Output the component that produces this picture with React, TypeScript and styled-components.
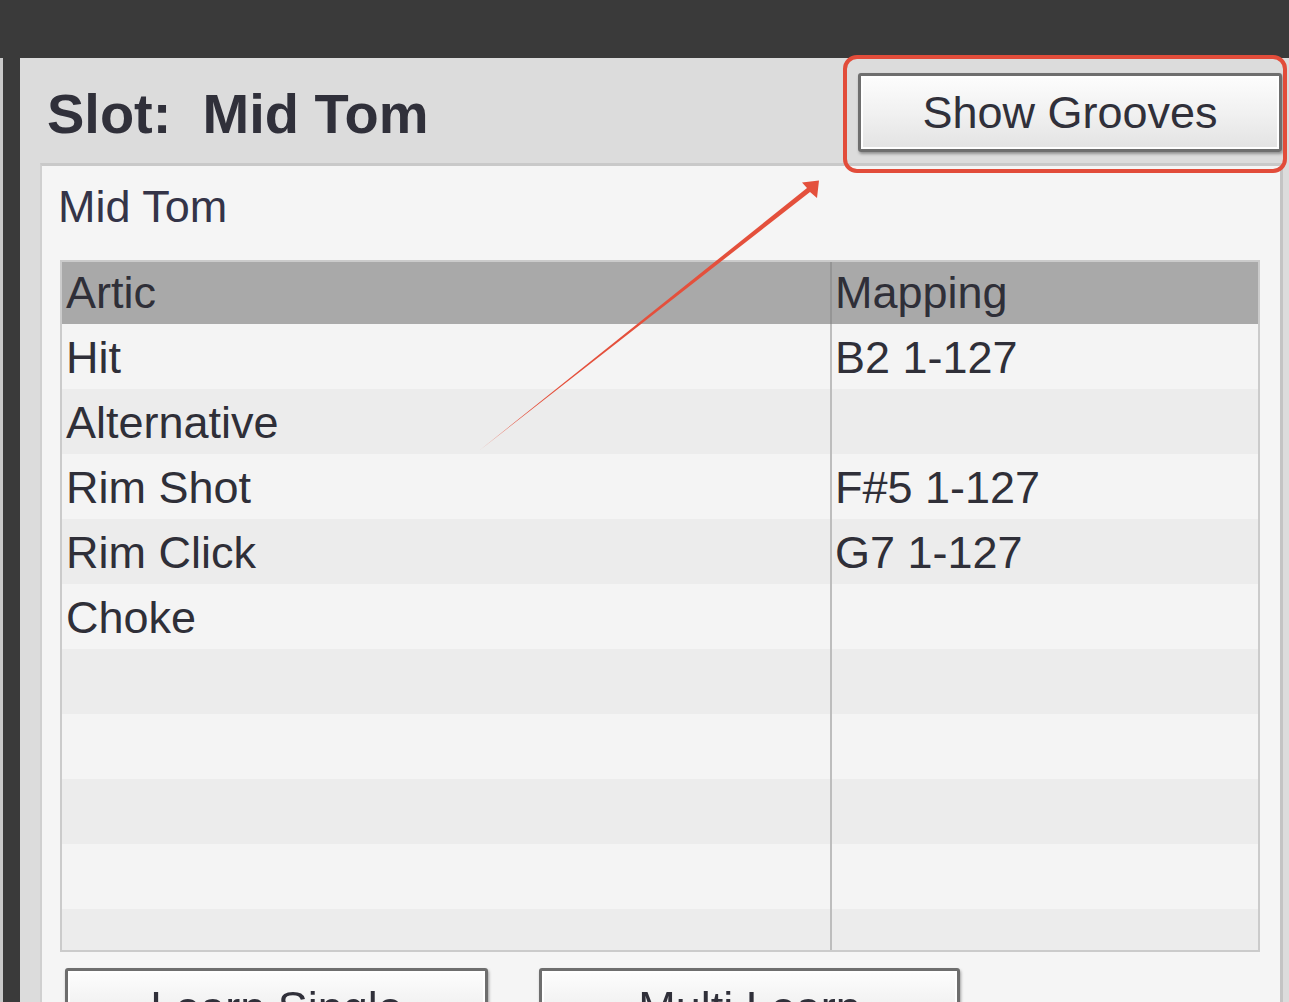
import React from "react";
import styled, { createGlobalStyle } from "styled-components";

const GlobalStyle = createGlobalStyle`
  html, body {
    margin: 0;
    padding: 0;
    overflow: hidden;
    background: #dcdcdc;
  }
  * {
    box-sizing: border-box;
  }
`;

const Screen = styled.div`
  position: relative;
  width: 1289px;
  height: 1002px;
  overflow: hidden;
  font-family: "Liberation Sans", Arial, sans-serif;
  color: #2f2f38;
`;

const Window = styled.div`
  display: flex;
  flex-direction: column;
  height: 100%;
  filter: blur(0.6px);
`;

const TopBar = styled.div`
  height: 58px;
  flex-shrink: 0;
  background: #3a3a3a;
`;

const Body = styled.div`
  flex: 1;
  display: flex;
  min-height: 0;
`;

const SideRail = styled.div`
  width: 20px;
  flex-shrink: 0;
  background: #3a3a3a;
  border-left: 3px solid #c9c9c9;
`;

const Main = styled.div`
  flex: 1;
  min-width: 0;
  display: flex;
  flex-direction: column;
  background: #dcdcdc;
  padding: 0 6px 0 20px;
`;

const Header = styled.div`
  height: 105px;
  flex-shrink: 0;
  display: flex;
  justify-content: space-between;
  align-items: flex-start;
  padding: 0 1px 0 7px;
`;

const Title = styled.h1`
  margin: 24px 0 0;
  font-size: 56px;
  font-weight: bold;
  line-height: 64px;
  white-space: pre;
  color: #30303a;
`;

const Button = styled.button<{ $w: number }>`
  width: ${(p) => p.$w}px;
  height: 79px;
  flex-shrink: 0;
  padding: 0;
  display: flex;
  align-items: center;
  justify-content: center;
  font-family: inherit;
  font-size: 45px;
  color: #30303a;
  border: 3px solid #6e6e6e;
  border-radius: 3px;
  background: linear-gradient(#fdfdfd 0%, #f1f1f1 50%, #e3e3e3 100%);
  box-shadow: inset 0 0 0 2px #ffffff, 1px 2px 3px rgba(0, 0, 0, 0.35);
`;

const GrooveButton = styled(Button)`
  margin-top: 15px;
`;

const Panel = styled.div`
  flex: 1;
  display: flex;
  flex-direction: column;
  background: #f5f5f5;
  border-top: 3px solid #c9c9c9;
  border-left: 2px solid #d0d0d0;
  border-right: 3px solid #c4c4c4;
  padding: 14px 0 0 16px;
`;

const Subtitle = styled.div`
  font-size: 45px;
  line-height: 54px;
  color: #343448;
`;

const Table = styled.div`
  width: 1200px;
  height: 692px;
  flex-shrink: 0;
  margin: 26px 0 0 2px;
  display: flex;
  flex-direction: column;
  border: 2px solid #cbcbcb;
  background: #f4f4f4;
`;

const HeadRow = styled.div`
  display: grid;
  grid-template-columns: 770px 1fr;
  height: 62px;
  flex-shrink: 0;
  background: #a9a9a9;
`;

const HeadCell = styled.div<{ $first?: boolean }>`
  font-size: 45px;
  line-height: 62px;
  padding-left: ${(p) => (p.$first ? 4 : 3)}px;
  border-right: ${(p) => (p.$first ? "2px solid #959595" : "none")};
  white-space: nowrap;
`;

const Rows = styled.div`
  flex: 1;
  overflow: hidden;
`;

const Row = styled.div<{ $alt: boolean }>`
  display: grid;
  grid-template-columns: 770px 1fr;
  height: 65px;
  background: ${(p) => (p.$alt ? "#ececec" : "#f4f4f4")};
`;

const Cell = styled.div<{ $first?: boolean }>`
  font-size: 45px;
  line-height: 62px;
  padding: 3px 0 0 ${(p) => (p.$first ? 4 : 3)}px;
  border-right: ${(p) => (p.$first ? "2px solid #bdbdbd" : "none")};
  white-space: nowrap;
`;

const Footer = styled.div`
  display: flex;
  gap: 51px;
  margin: 16px 0 0 7px;
`;

const Overlay = styled.svg`
  position: absolute;
  left: 0;
  top: 0;
  pointer-events: none;
`;

const rows = [
  { artic: "Hit", mapping: "B2 1-127" },
  { artic: "Alternative", mapping: "" },
  { artic: "Rim Shot", mapping: "F#5 1-127" },
  { artic: "Rim Click", mapping: "G7 1-127" },
  { artic: "Choke", mapping: "" },
  { artic: "", mapping: "" },
  { artic: "", mapping: "" },
  { artic: "", mapping: "" },
  { artic: "", mapping: "" },
  { artic: "", mapping: "" },
];

const App: React.FC = () => {
  return (
    <Screen>
      <GlobalStyle />
      <Window>
        <TopBar />
        <Body>
          <SideRail />
          <Main>
            <Header>
              <Title>{"Slot:  Mid Tom"}</Title>
              <GrooveButton $w={424}>Show Grooves</GrooveButton>
            </Header>
            <Panel>
              <Subtitle>Mid Tom</Subtitle>
              <Table>
                <HeadRow>
                  <HeadCell $first>Artic</HeadCell>
                  <HeadCell>Mapping</HeadCell>
                </HeadRow>
                <Rows>
                  {rows.map((r, i) => (
                    <Row key={i} $alt={i % 2 === 1}>
                      <Cell $first>{r.artic}</Cell>
                      <Cell>{r.mapping}</Cell>
                    </Row>
                  ))}
                </Rows>
              </Table>
              <Footer>
                <Button $w={423}>Learn Single</Button>
                <Button $w={421}>Multi Learn</Button>
              </Footer>
            </Panel>
          </Main>
        </Body>
      </Window>

      {/* annotation on top of the screenshot */}
      <Overlay width={1289} height={1002} viewBox="0 0 1289 1002">
        <rect
          x={845}
          y={57}
          width={440}
          height={114}
          rx={12}
          fill="none"
          stroke="#e24c3a"
          strokeWidth={4}
        />
        <polygon
          points="480,450 807,188 802,182.5 819,180.5 817,198 810,192"
          fill="#e4503c"
        />
      </Overlay>
    </Screen>
  );
};

export default App;
